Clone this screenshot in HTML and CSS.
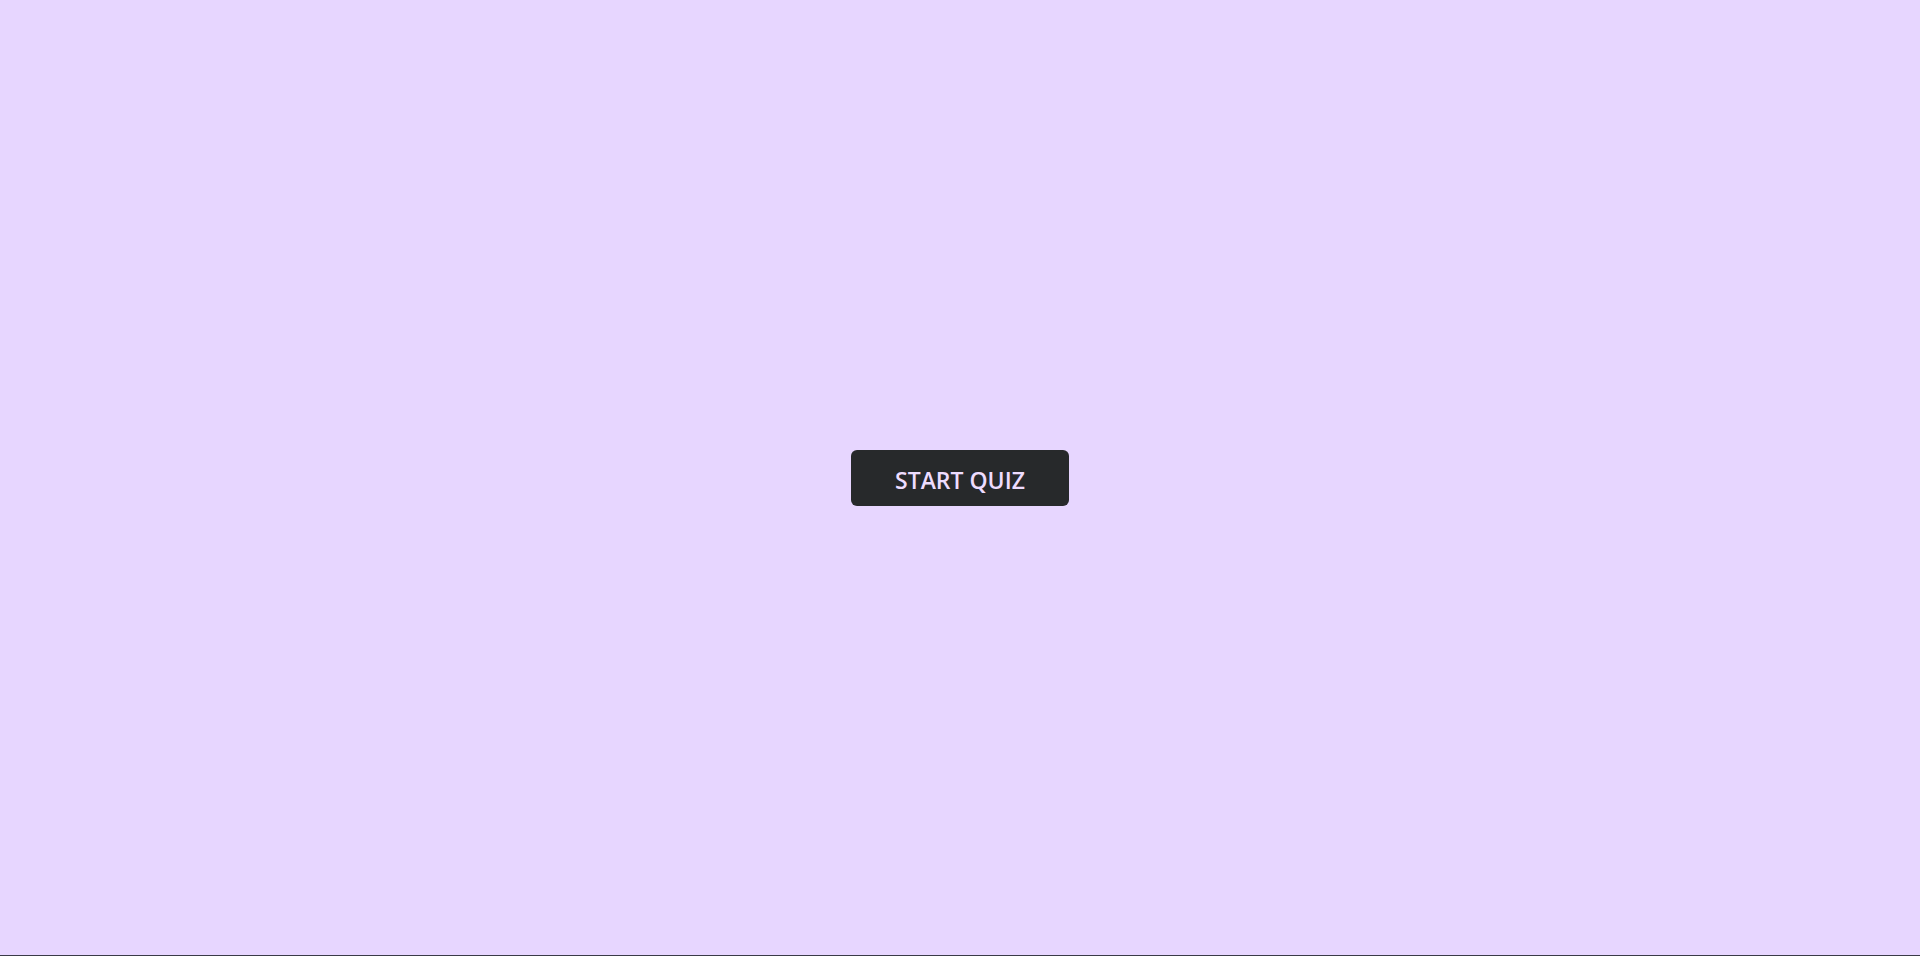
FILE: index.html
```html
<!DOCTYPE html>
<html>
<head>
<meta charset="utf-8">
<link rel="stylesheet" href="styles.css">
<title>Quiz</title>
</head>
<body>
<main class="app">
  <button class="start-btn">START QUIZ</button>
</main>
<div class="bottom-line"></div>
</body>
</html>
```
FILE: styles.css
```css
html, body {
  margin: 0;
  padding: 0;
  height: 100%;
}
body {
  background: #e7d6ff;
  display: flex;
  flex-direction: column;
  font-family: "Open Sans", "Noto Sans", sans-serif;
}
.app {
  flex: 1;
  display: flex;
  align-items: center;
  justify-content: center;
  padding-top: 1px;
}
.start-btn {
  width: 218px;
  height: 56px;
  padding: 3px 0 0;
  background: #27292b;
  color: #eedcff;
  border: none;
  border-radius: 6px;
  font-family: "Open Sans", "Noto Sans", sans-serif;
  font-weight: 600;
  font-size: 23px;
  cursor: pointer;
}
.bottom-line {
  height: 1px;
  background: #3a3a48;
}
```
